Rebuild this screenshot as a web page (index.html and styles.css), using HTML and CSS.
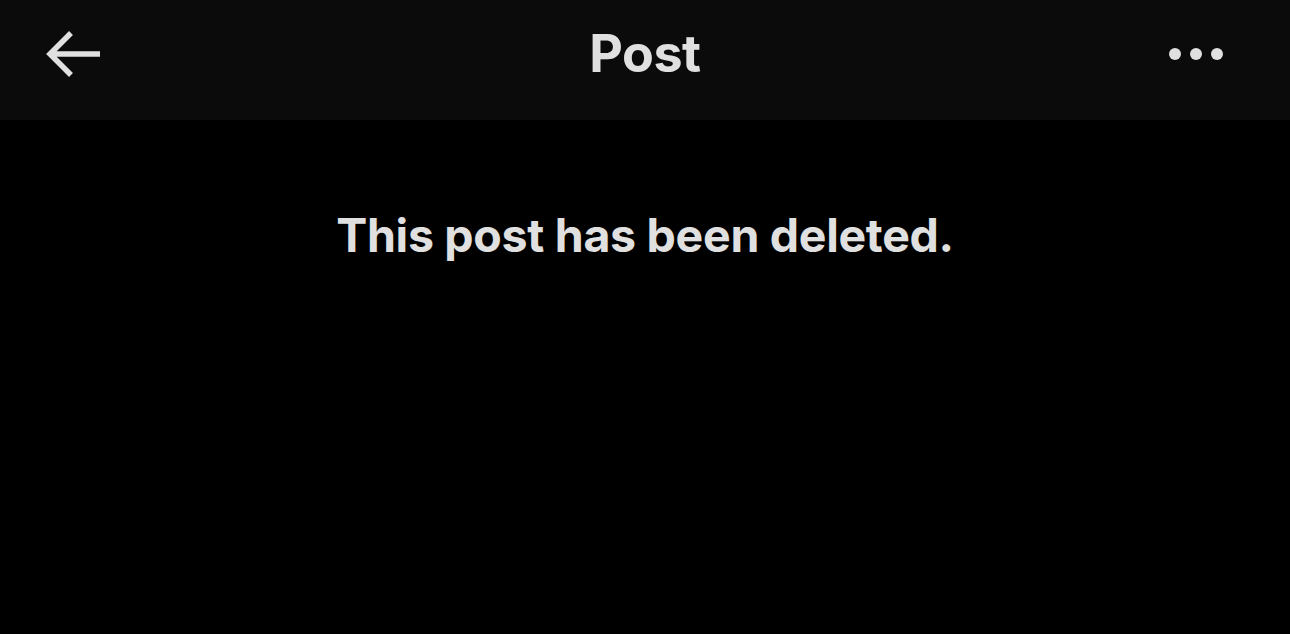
FILE: index.html
```html
<!DOCTYPE html>
<html>
<head>
<meta charset="utf-8">
<link rel="stylesheet" href="styles.css">
</head>
<body>
<header class="topbar">
  <div class="back">
    <svg width="56" height="48" viewBox="0 0 56 48"><path d="M25 3 L4 24 L25 45 M4 24 L54 24" fill="none" stroke="#e0e0e0" stroke-width="5.5" stroke-linejoin="miter" stroke-linecap="butt"/></svg>
  </div>
  <div class="title">Post</div>
  <div class="more"><span class="dot"></span><span class="dot"></span><span class="dot"></span></div>
</header>
<main class="content">
  <p class="msg">This post has been deleted.</p>
</main>
</body>
</html>
```
FILE: styles.css
```css
html, body { margin: 0; padding: 0; background: #000; }
body { width: 1290px; height: 634px; overflow: hidden; font-family: Inter, "Noto Sans", sans-serif; color: #e0e0e0; }
.topbar { height: 120px; background: #0b0b0b; display: grid; grid-template-columns: 1fr auto 1fr; align-items: center; padding: 0 46px; box-sizing: border-box; }
.back { width: 56px; height: 48px; display: flex; margin-top: -12px; justify-self: start; }
.title { font-size: 52px; font-weight: 700; letter-spacing: -0.5px; margin-top: -13px; }
.more { display: flex; gap: 9px; margin-top: -13px; margin-right: 21px; justify-self: end; }
.dot { width: 12px; height: 12px; border-radius: 50%; background: #e0e0e0; }
.content { display: flex; justify-content: center; }
.msg { margin: 87px 0 0; font-size: 46.5px; font-weight: 700; letter-spacing: -0.3px; }
```
